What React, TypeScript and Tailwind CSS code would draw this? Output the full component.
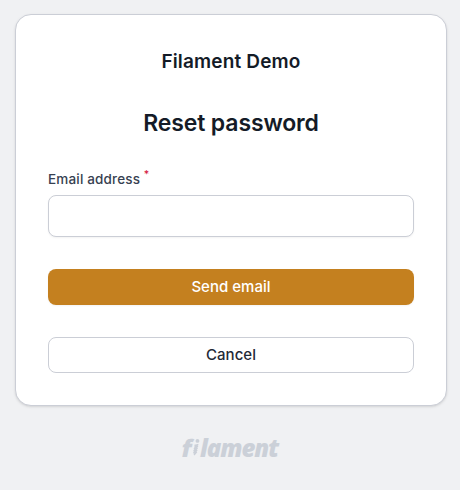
import React from 'react';

function FilamentLogo() {
  return (
    <div className="ml-[182px] mt-[27px] flex h-[30px] w-[98px] text-[24px] leading-[30px] font-extrabold text-[#cbd0d8] font-['Open_Sans','Noto_Sans',sans-serif]">
      <span className="w-[11px] -skew-x-12">f</span>
      <svg viewBox="0 0 8 30" className="h-[30px] w-[7px] shrink-0 overflow-visible" fill="none" stroke="currentColor" aria-label="i">
        <circle cx="5.1" cy="6.9" r="2.2" fill="currentColor" stroke="none" />
        <path d="M1.6 12 5.5 11.1 2 13.8 5.2 13.1 1.5 16 4.8 15.3 1 18.2 4.4 17.5 0.8 20.4 4 19.7 1.2 23" strokeWidth="1.6" strokeLinejoin="round" />
      </svg>
      <span className="italic tracking-[-1.05px]">lament</span>
    </div>
  );
}

export default function App() {
  return (
    <main className="h-[490px] w-[460px] overflow-hidden bg-[#f0f1f3] pt-[14px] font-['Inter','Liberation_Sans',sans-serif]">
      <section className="ml-[15px] h-[392px] w-[432px] rounded-2xl border border-[#cbced6] bg-white px-8 pt-[33px] shadow">
        <div className="flex h-[28px] items-center justify-center text-[19px] leading-7 font-semibold tracking-[0.16px] text-[#141b27]">Filament Demo</div>
        <h1 className="mt-[31px] text-center text-[23px] leading-8 font-semibold tracking-[-0.13px] text-[#141b27]">Reset password</h1>
        <form onSubmit={(event) => event.preventDefault()}>
          <label htmlFor="email" className="mt-[30px] flex h-5 text-[13.5px] leading-5 font-medium text-[#374151]">
            <span className="tracking-[0.17px]">Email address</span>
            <sup className="top-0 ml-[3.5px] mt-[-2px] text-[10.5px] leading-4 text-[#d52346]">*</sup>
          </label>
          <input id="email" type="email" className="mt-[6px] block h-[42px] w-full rounded-lg border border-[#cbced6] bg-white px-3 shadow-xs outline-none" />
          <button type="submit" className="mt-8 block h-9 w-full rounded-lg bg-[#c4801f] text-[15px] font-medium tracking-[0.02px] text-white shadow-xs">Send email</button>
          <button type="button" className="mt-8 block h-9 w-full rounded-lg border border-[#cbced6] bg-white text-[15px] font-medium tracking-[0.05px] text-[#1f2937]">Cancel</button>
        </form>
      </section>
      <FilamentLogo />
    </main>
  );
}
